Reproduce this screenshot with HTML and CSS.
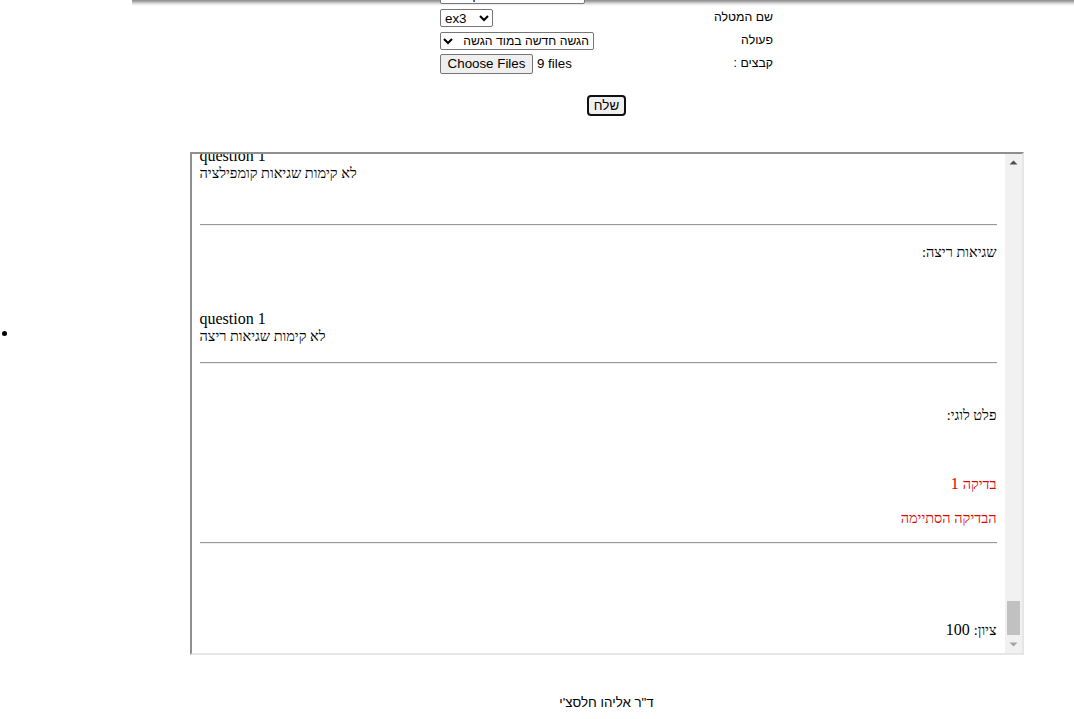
FILE: index.html
```html
<!DOCTYPE html>
<html lang="he">
<head>
<meta charset="utf-8">
<title>הגשת מטלות</title>
<link rel="stylesheet" href="styles.css">
</head>
<body>
<div class="page">
  <div class="gutter"><span class="dot"></span></div>
  <main class="main">
    <form class="form">
      <div class="grid">
        <div class="ctl"><select class="sel sel-course"><option>תכנות מתקדם 1</option></select></div>
        <div class="lbl"></div>
        <div class="ctl"><select class="sel sel-ex"><option>ex3</option></select></div>
        <div class="lbl">שם המטלה</div>
        <div class="ctl"><select class="sel sel-act" dir="rtl"><option>הגשה חדשה במוד הגשה</option></select></div>
        <div class="lbl">פעולה</div>
        <div class="ctl"><button type="button" class="choose">Choose Files</button><span class="files">9 files</span></div>
        <div class="lbl">קבצים :</div>
      </div>
      <div class="submit-row"><button type="button" class="submit">שלח</button></div>
    </form>
    <div class="frame">
      <div class="viewport">
        <div class="doc">
          <div class="q q-first">question 1<br><span class="he">לא קימות שגיאות קומפילציה</span></div>
          <div class="rule rule-1"></div>
          <div class="line rtl h-run"><span class="he">שגיאות ריצה:</span></div>
          <div class="q q-run">question 1<br><span class="he">לא קימות שגיאות ריצה</span></div>
          <div class="rule rule-2"></div>
          <div class="line rtl h-log"><span class="he">פלט לוגי:</span></div>
          <div class="line rtl red t-1"><span class="he">בדיקה</span> 1</div>
          <div class="line rtl red t-end"><span class="he">הבדיקה הסתיימה</span></div>
          <div class="rule rule-3"></div>
          <div class="line rtl grade"><span class="he">ציון:</span> 100</div>
        </div>
      </div>
      <div class="scrollbar" aria-hidden="true">
        <div class="sb-btn">
          <svg width="17" height="17" viewBox="0 0 17 17"><path d="M4.5 10.5h8L8.5 6.5z" fill="#505050"/></svg>
        </div>
        <div class="sb-track"><div class="sb-thumb"></div></div>
        <div class="sb-btn">
          <svg width="17" height="17" viewBox="0 0 17 17"><path d="M4.5 6.5h8L8.5 10.5z" fill="#a3a3a3"/></svg>
        </div>
      </div>
    </div>
    <footer class="footer">ד"ר אליהו חלסצ'י</footer>
  </main>
</div>
</body>
</html>
```

FILE: styles.css
```css
html, body {
  margin: 0;
  padding: 0;
  background: #fff;
}
body {
  font-family: "Liberation Sans", Arial, sans-serif;
  color: #000;
  overflow: hidden;
}
.page {
  display: flex;
  align-items: flex-start;
  height: 719px;
}
.gutter {
  width: 132px;
  flex: none;
}
.dot {
  display: block;
  width: 5px;
  height: 5px;
  border-radius: 50%;
  background: #000;
  margin: 331px 0 0 2px;
}
.main {
  flex: 1;
  padding-left: 7px;
  background: linear-gradient(to bottom, #8a8a8a 0, #b5b5b5 2px, #e6e6e6 4px, #fff 6px) no-repeat top left / 100% 6px;
}
.form {
  margin: 0;
}
.grid {
  display: grid;
  grid-template-columns: 250px 83px;
  grid-auto-rows: 21px;
  row-gap: 2px;
  justify-content: center;
  margin-top: -16px;
}
.ctl {
  display: flex;
  align-items: center;
}
.lbl {
  direction: rtl;
  text-align: right;
  font-size: 12.3px;
  line-height: 21px;
}
.sel {
  font: 13.33px "Liberation Sans", Arial, sans-serif;
  height: 18px;
  padding: 0;
  border: 1px solid #767676;
  border-radius: 2px;
  background: #fff;
  color: #000;
}
.sel-course { width: 145px; }
.sel-ex { width: 53px; }
.sel-act {
  width: 154px;
  font-size: 12.2px;
}
.choose {
  font: 13.33px "Liberation Sans", Arial, sans-serif;
  height: 20px;
  width: 93px;
  padding: 0 6px;
  border: 1px solid #767676;
  border-radius: 2px;
  background: #efefef;
  color: #000;
}
.files {
  font-size: 13.33px;
  margin-left: 4px;
}
.submit-row {
  display: flex;
  justify-content: center;
  margin-top: 21px;
}
.submit {
  font: 13.33px "Liberation Sans", Arial, sans-serif;
  height: 21px;
  width: 39px;
  padding: 0;
  border: 2px solid #101010;
  border-radius: 4px;
  background: #efefef;
  color: #000;
}
.frame {
  width: 834px;
  height: 503px;
  box-sizing: border-box;
  margin: 36px auto 0;
  border-style: solid;
  border-width: 2px;
  border-color: #8f8f8f #e6e6e6 #e6e6e6 #8f8f8f;
  display: flex;
}
.viewport {
  flex: 1;
  min-width: 0;
  overflow: hidden;
  display: flex;
  flex-direction: column-reverse;
}
.scrollbar {
  width: 17px;
  flex: none;
  background: #f1f1f1;
  display: flex;
  flex-direction: column;
}
.sb-btn {
  height: 17px;
  flex: none;
}
.sb-btn svg {
  display: block;
}
.sb-track {
  flex: 1;
  display: flex;
  flex-direction: column;
  justify-content: flex-end;
}
.sb-thumb {
  height: 34px;
  margin: 0 2px 1px;
  background: #c1c1c1;
}
.doc {
  flex: none;
  padding: 0 8px 15px;
  font-family: "Liberation Serif", "Times New Roman", serif;
  font-size: 16px;
  line-height: 17px;
}
.he {
  font-size: 14.5px;
}
.line {
  height: 17px;
  overflow: visible;
}
.q {
  height: 34px;
}
.rtl {
  direction: rtl;
  text-align: right;
}
.red {
  color: #e00000;
}
.rule {
  border-top: 1px solid #9a9a9a;
  border-bottom: 1px solid #eeeeee;
}
.rule-1 { margin-top: 43px; }
.h-run { margin-top: 17px; }
.q-run { margin-top: 50px; }
.rule-2 { margin-top: 18px; }
.h-log { margin-top: 42px; }
.t-1 { margin-top: 52px; }
.t-end { margin-top: 17px; }
.rule-3 { margin-top: 16px; }
.grade { margin-top: 77px; }
.footer {
  text-align: center;
  font-size: 13.33px;
  line-height: 16px;
  margin-top: 40px;
  direction: rtl;
}
```
